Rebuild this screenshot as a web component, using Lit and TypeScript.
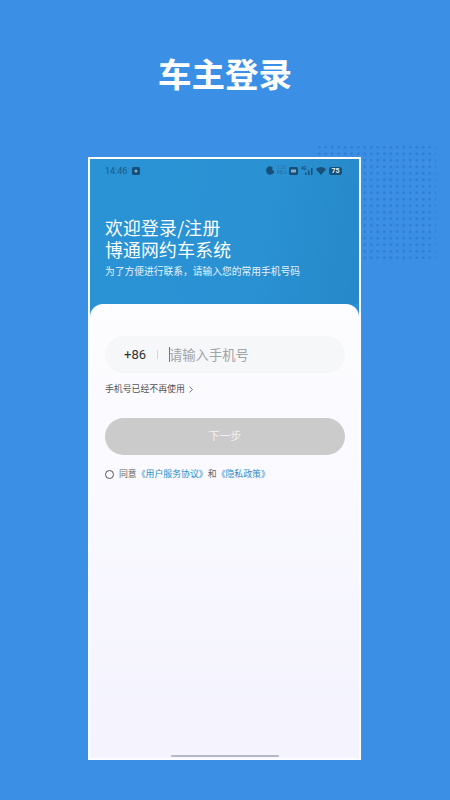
import { LitElement, html, css } from "lit";
import { customElement } from "lit/decorators.js";

@customElement("app-root")
export class AppRoot extends LitElement {
  static styles = css`
    :host { display: block; width: 450px; height: 800px; overflow: hidden; background: #3b90e6; font-family: "Noto Sans CJK SC", "Noto Sans", sans-serif; position: relative; }
    .title { margin: 0; height: 157px; box-sizing: border-box; padding-top: 48px; text-align: center; color: #fff; font-size: 33.5px; line-height: 50px; font-weight: 700; letter-spacing: 0; }
    .dots { position: absolute; left: 316px; top: 144px; width: 120px; height: 118px; background-image: radial-gradient(circle, rgba(28,96,184,.42) 1px, transparent 1.5px); background-size: 6.5px 6.5px; }
    .phone { position: relative; margin-left: 88px; width: 273px; height: 603px; box-sizing: border-box; border: 2px solid #fbfdff; background: #2a92d4; display: flex; flex-direction: column; overflow: hidden; }
    .head { height: 145px; flex: none; box-sizing: border-box; padding: 0 15px; background: linear-gradient(100deg, #2a93d5 0%, #2a92d3 60%, #2688c8 100%); color: #fff; }
    .status { height: 23px; display: flex; align-items: center; justify-content: space-between; }
    .status-l { display: flex; align-items: center; gap: 5px; color: #1c5a85; font-size: 9px; font-family: "Roboto", sans-serif; }
    .status-r { display: flex; align-items: center; gap: 3px; margin-right: 2px; }
    .status svg { display: block; }
    .speed { color: #2c6a98; font-size: 4.5px; line-height: 4.5px; text-align: center; font-family: "Roboto", sans-serif; width: 9px; white-space: nowrap; }
    .net { position: relative; width: 12px; height: 8px; }
    .g { position: absolute; left: 0; top: 0; color: #174f78; font-size: 4.5px; line-height: 4.5px; font-weight: 700; font-family: "Roboto", sans-serif; }
    .batt { background: #1a4f75; color: #e8f3fa; font-size: 7px; line-height: 8px; font-weight: 700; border-radius: 2.5px; padding: 0 2.5px; font-family: "Roboto", sans-serif; }
    h2 { margin: 34px 0 0; font-size: 17.8px; font-weight: 400; letter-spacing: 0.25px; }
    h2 span { display: block; height: 22px; line-height: 22px; }
    .sub { margin: 4px 0 0; font-size: 9.75px; line-height: 14px; color: #e4f1fa; }
    .sheet { flex: 1; position: relative; border-radius: 13px 13px 0 0; background: linear-gradient(180deg, #fdfdff 0%, #f4f3fe 100%); padding: 32px 14px 0 15px; display: flex; flex-direction: column; }
    .input { height: 37px; flex: none; border-radius: 19px; background: #f5f7f9; display: flex; align-items: center; }
    .cc { margin-left: 19px; font-size: 13px; color: #333; width: 33px; font-family: "Roboto", sans-serif; }
    .sep { width: 1px; height: 9px; background: #d5d8da; }
    .caret { width: 1px; height: 15px; background: #4a7fb0; margin-left: 11px; }
    .ph { font-size: 13.3px; color: #a2a4a6; margin-left: -1px; }
    .lost { margin-top: 9px; height: 14px; display: flex; align-items: center; gap: 4px; font-size: 8.9px; line-height: 14px; color: #555; }
    .btn { margin-top: 22px; height: 37px; flex: none; border-radius: 19px; background: #cbcbcb; color: #f2f2f2; font-size: 11px; line-height: 35px; display: flex; align-items: flex-start; justify-content: center; }
    .agree { margin-top: 12px; display: flex; align-items: center; font-size: 8.9px; line-height: 14px; color: #666; }
    .radio { width: 7px; height: 7px; border: 1px solid #555; border-radius: 50%; margin-right: 5px; flex: none; }
    .link { color: #2f8ec6; }
    .home { position: absolute; left: 81px; bottom: 1px; width: 108px; height: 2px; background: #b5b9c6; border-radius: 1px; }
  `;
  render() {
    return html`
      <div class="dots"></div>
      <h1 class="title">车主登录</h1>
      <div class="phone">
        <div class="head">
          <div class="status">
            <div class="status-l"><span>14:46</span>
              <svg width="8" height="8" viewBox="0 0 8 8"><rect width="8" height="8" rx="1.5" fill="#174f78"/><circle cx="4" cy="4" r="1.5" fill="#7fb0d0"/></svg>
            </div>
            <div class="status-r">
              <svg width="8" height="9" viewBox="0 0 8 9"><path d="M1 1.5 4 0l3 1.6-1 2 2 1.6V7L4 9 1 7.5 0 4.5z" fill="#174f78"/></svg>
              <div class="speed">1.20<br />KB/s</div>
              <svg width="9" height="8" viewBox="0 0 9 8"><rect width="9" height="8" rx="1.5" fill="#174f78"/><rect x="2" y="2.5" width="5" height="3" fill="#7fb0d0"/></svg>
              <div class="net"><span class="g">4G</span>
                <svg width="12" height="8" viewBox="0 0 12 8" fill="#174f78"><rect x="4" y="5.5" width="1.5" height="2.5"/><rect x="7" y="3.5" width="1.5" height="4.5"/><rect x="10" y="1" width="1.5" height="7"/></svg>
              </div>
              <svg width="10" height="8" viewBox="0 0 10 8"><path d="M0 2.2C3 -.7 7 -.7 10 2.2L5 8z" fill="#174f78"/></svg>
              <span class="batt">75</span>
            </div>
          </div>
          <h2><span>欢迎登录/注册</span><span>博通网约车系统</span></h2>
          <p class="sub">为了方便进行联系，请输入您的常用手机号码</p>
        </div>
        <div class="sheet">
          <div class="input">
            <span class="cc">+86</span><span class="sep"></span><span class="caret"></span><span class="ph">请输入手机号</span>
          </div>
          <div class="lost"><span>手机号已经不再使用</span>
            <svg width="4" height="7" viewBox="0 0 4 7" fill="none" stroke="#555" stroke-width=".8"><path d="M.5.5 3.5 3.5.5 6.5"/></svg>
          </div>
          <div class="btn">下一步</div>
          <div class="agree"><span class="radio"></span><span>同意</span><span class="link">《用户服务协议》</span><span>和</span><span class="link">《隐私政策》</span></div>
          <div class="home"></div>
        </div>
      </div>
    `;
  }
}
